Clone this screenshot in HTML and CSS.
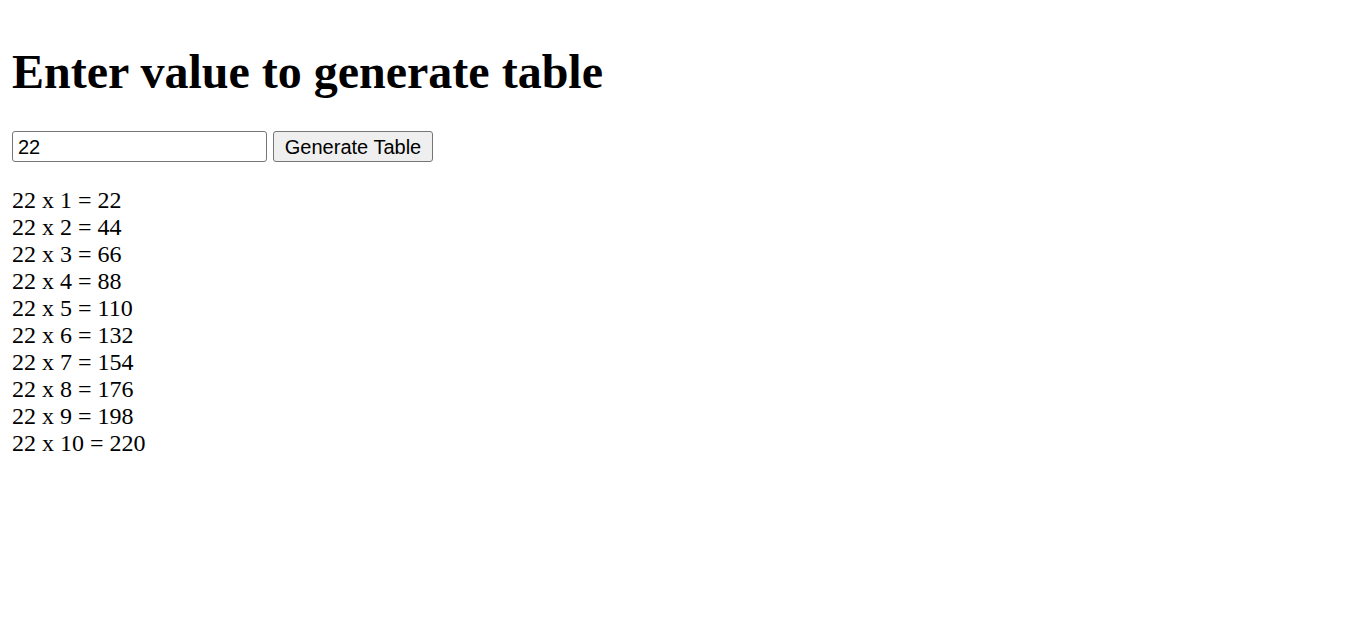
FILE: index.html
```html
<!DOCTYPE html>
<html>
<head>
<meta charset="utf-8">
<link rel="stylesheet" href="styles.css">
</head>
<body>
<h1 class="title">Enter value to generate table</h1>
<div class="controls">
  <input class="num-input" type="text" value="22">
  <button class="gen-btn">Generate Table</button>
</div>
<div class="result">
  <div>22 x 1 = 22</div>
  <div>22 x 2 = 44</div>
  <div>22 x 3 = 66</div>
  <div>22 x 4 = 88</div>
  <div>22 x 5 = 110</div>
  <div>22 x 6 = 132</div>
  <div>22 x 7 = 154</div>
  <div>22 x 8 = 176</div>
  <div>22 x 9 = 198</div>
  <div>22 x 10 = 220</div>
</div>
</body>
</html>
```
FILE: styles.css
```css
html, body {
  background: #fff;
}
body {
  margin: 12px;
  font-family: "Liberation Serif", "Times New Roman", serif;
  font-size: 24px;
  line-height: 27px;
  color: #000;
}
.title {
  font-size: 48px;
  line-height: 55px;
  font-weight: bold;
  margin: 32px 0;
}
.controls {
  display: flex;
  align-items: center;
  gap: 6px;
  height: 31px;
}
.num-input {
  box-sizing: border-box;
  width: 255px;
  height: 31px;
  margin: 0;
  padding: 2px 5px 0;
  border: 1px solid #767676;
  border-radius: 3px;
  font-family: "Liberation Sans", Arial, sans-serif;
  font-size: 20px;
  color: #000;
  background: #fff;
}
.gen-btn {
  box-sizing: border-box;
  width: 160px;
  height: 31px;
  margin: 0;
  padding: 2px 9px 0;
  border: 1px solid #767676;
  border-radius: 3px;
  background: #efefef;
  font-family: "Liberation Sans", Arial, sans-serif;
  font-size: 20px;
  color: #000;
}
.result {
  margin-top: 25px;
}
```
